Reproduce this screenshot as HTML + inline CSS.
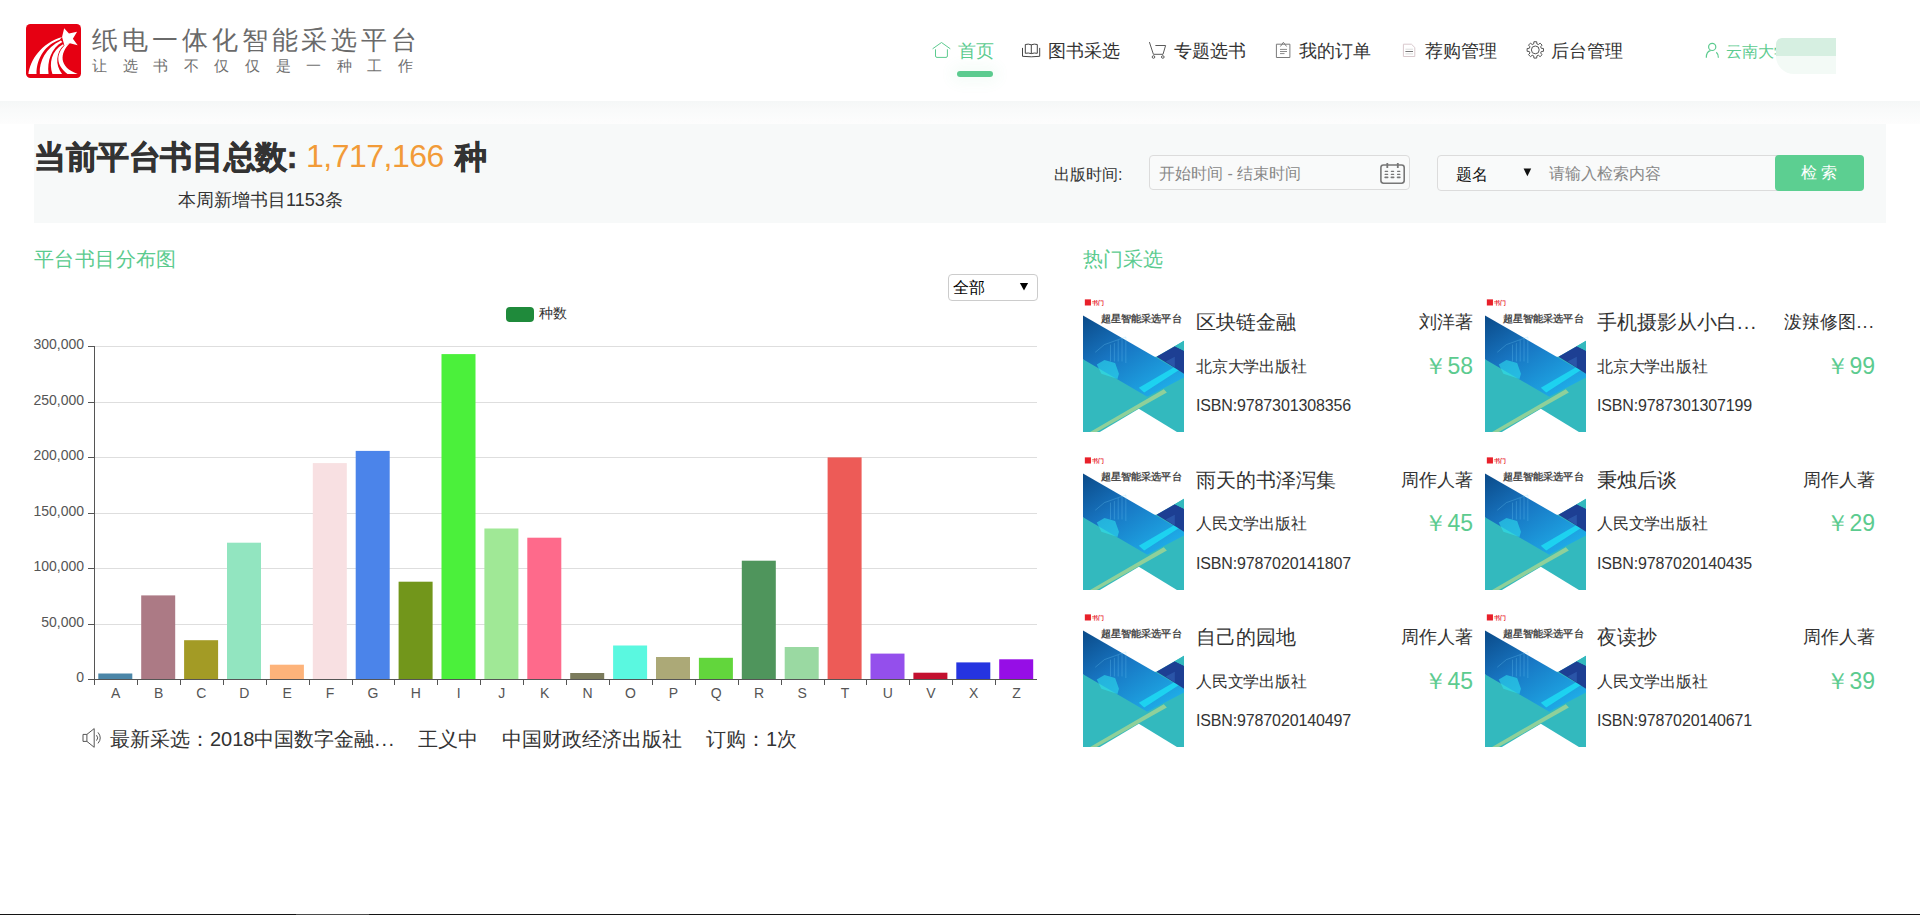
<!DOCTYPE html>
<html><head><meta charset="utf-8"><title>纸电一体化智能采选平台</title>
<style>
html,body{margin:0;padding:0;width:1920px;height:915px;overflow:hidden;background:#fff;font-family:"Liberation Sans",sans-serif;}
.t{position:absolute;white-space:nowrap;}
#hdr{position:absolute;left:0;top:0;width:1920px;height:101px;background:#fff;}
#shadow{position:absolute;left:0;top:101px;width:1920px;height:23px;background:linear-gradient(#f5f7f7,#f9fafa 40%,#fdfdfd);}
#panel{position:absolute;left:34px;top:124px;width:1852px;height:99px;background:#f7f9f9;}
.yl{left:0;width:84px;text-align:right;font-size:14px;line-height:18px;color:#555;}
.xl{top:684px;width:40px;text-align:center;font-size:14px;line-height:18px;color:#555;}
</style></head><body>
<svg width="0" height="0" style="position:absolute"><defs>
<linearGradient id="bg" x1="0" y1="0" x2="0.8" y2="1"><stop offset="0" stop-color="#0b4a88"/><stop offset="0.45" stop-color="#1877c4"/><stop offset="1" stop-color="#1fb0ea"/></linearGradient>
</defs></svg>
<div id="hdr"></div><div id="shadow"></div>
<svg style="position:absolute;left:26px;top:24px" width="55" height="54" viewBox="0 0 55 54">
<rect x="0" y="0" width="55" height="54" rx="4.5" fill="#e60012"/>
<g transform="scale(0.0601)" fill="#fff">
<path d="M635,70 L715,160 L850,130 L780,245 L860,355 L730,320 L640,360 L600,215 Z"/>
<path d="M40,830 C70,600 250,320 600,215 L560,262 C330,340 175,560 175,830 Z"/>
<path d="M230,830 C215,620 330,400 580,275 L605,300 C420,400 350,620 375,830 Z"/>
<path d="M440,830 C380,650 420,450 615,335 L630,355 C500,470 480,680 600,830 Z"/>
<path d="M690,830 C500,690 490,500 650,350 L730,320 C560,480 540,720 860,830 Z"/>
</g></svg>
<div class="t" style="left:92px;top:26.7px;font-size:26px;line-height:26px;color:#6a6a6a;font-weight:normal;letter-spacing:3.92px">纸电一体化智能采选平台</div>
<div class="t" style="left:92px;top:58.6px;font-size:14.5px;line-height:14.5px;color:#707070;font-weight:normal;letter-spacing:15.6px">让选书不仅仅是一种工作</div>
<div class="t" style="left:958px;top:42px;font-size:18px;line-height:18px;color:#5ccb8f;font-weight:normal;">首页</div>
<div class="t" style="left:1048px;top:42px;font-size:18px;line-height:18px;color:#333;font-weight:normal;">图书采选</div>
<div class="t" style="left:1174px;top:42px;font-size:18px;line-height:18px;color:#333;font-weight:normal;">专题选书</div>
<div class="t" style="left:1299px;top:42px;font-size:18px;line-height:18px;color:#333;font-weight:normal;">我的订单</div>
<div class="t" style="left:1425px;top:42px;font-size:18px;line-height:18px;color:#333;font-weight:normal;">荐购管理</div>
<div class="t" style="left:1551px;top:42px;font-size:18px;line-height:18px;color:#333;font-weight:normal;">后台管理</div>
<div style="position:absolute;left:957px;top:71px;width:36px;height:6px;border-radius:3px;background:#5ccb8f;box-shadow:0 0 14px 6px rgba(92,203,143,0.06)"></div>
<svg style="position:absolute;left:0;top:0" width="1920" height="101" viewBox="0 0 1920 101" fill="none">
<g stroke="#5ccb8f" stroke-width="1"><path d="M932.6 48.8 L941.5 42.5 L950.3 48.8"/><path d="M935.5 49.3 V56 Q935.5 57.4 937 57.4 H946 Q947.4 57.4 947.4 56 V49.3"/></g>
<g stroke="#444" stroke-width="1"><path d="M1025.3 44.5 Q1028.3 43.6 1031.3 44.8 Q1034.3 43.6 1037.3 44.5 V53.3 Q1034.3 52.6 1031.3 53.6 Q1028.3 52.6 1025.3 53.3 Z M1031.3 44.8 V53.6"/><path d="M1022.5 47.9 V56.3 L1031.3 56.8 L1039.7 56.3 V47.9"/></g>
<g stroke="#5a5a5a" stroke-width="1"><path d="M1149.4 42.1 L1153.4 54.3 H1163 L1165.6 45.5 H1155.4"/><circle cx="1153.5" cy="57" r="1.3"/><circle cx="1162.8" cy="57" r="1.3"/></g>
<g stroke="#7a7a7a" stroke-width="1"><path d="M1276.4 44.2 H1289.9 V57.5 H1276.4 Z"/><path d="M1280.4 46.5 L1283.4 42.3 L1286.6 46.5"/><path d="M1280 49.4 H1287 M1280 51.5 H1287 M1280 53.6 H1284.5" stroke="#8a8a8a"/></g>
<g stroke-width="1"><path d="M1403.4 44.2 H1411.4 L1414.8 47.5 V56.5 H1403.4 Z" stroke="#d9c9cd"/><path d="M1405.4 49.2 H1413 M1405.4 53.9 H1413" stroke="#ddd"/><path d="M1405.4 51.5 H1413" stroke="#777"/></g>
<g stroke="#555" stroke-width="1"><path d="M1533.71 43.91 L1533.90 41.72 L1536.70 41.72 L1536.89 43.91 L1538.41 44.54 L1540.09 43.12 L1542.08 45.11 L1540.66 46.79 L1541.29 48.31 L1543.48 48.50 L1543.48 51.30 L1541.29 51.49 L1540.66 53.01 L1542.08 54.69 L1540.09 56.68 L1538.41 55.26 L1536.89 55.89 L1536.70 58.08 L1533.90 58.08 L1533.71 55.89 L1532.19 55.26 L1530.51 56.68 L1528.52 54.69 L1529.94 53.01 L1529.31 51.49 L1527.12 51.30 L1527.12 48.50 L1529.31 48.31 L1529.94 46.79 L1528.52 45.11 L1530.51 43.12 L1532.19 44.54 Z"/><circle cx="1535.3" cy="49.9" r="3.9"/></g>
<g stroke="#5ccb8f" stroke-width="1.2"><circle cx="1712.2" cy="46.9" r="3.6"/><path d="M1706.3 57.7 Q1706.3 51.5 1710.5 50.6"/><path d="M1716.3 52.2 Q1718.4 54 1718.4 57.7"/></g>
</svg>
<div class="t" style="left:1726px;top:44px;font-size:16px;line-height:16px;color:#5ccb8f;font-weight:normal;">云南大学</div>
<div style="position:absolute;left:1776px;top:38px;width:60px;height:18px;background:#d6efe1;border-radius:6px 0 0 0"></div>
<div style="position:absolute;left:1776px;top:56px;width:60px;height:18px;background:#f3faf6;border-radius:0 0 0 18px"></div>
<div id="panel"></div>
<div class="t" style="left:34px;top:141px;font-size:32px;line-height:32px;color:#333;font-weight:bold;letter-spacing:-0.4px;-webkit-text-stroke:0.7px #333">当前平台书目总数:</div>
<div class="t" style="left:306px;top:140px;font-size:32px;line-height:32px;color:#f29b38;font-weight:normal;letter-spacing:-0.5px">1,717,166</div>
<div class="t" style="left:455px;top:141px;font-size:32px;line-height:32px;color:#333;font-weight:bold;-webkit-text-stroke:0.7px #333">种</div>
<div class="t" style="left:178px;top:191px;font-size:18px;line-height:18px;color:#333;font-weight:normal;">本周新增书目1153条</div>
<div class="t" style="left:1054px;top:166.5px;font-size:16px;line-height:16px;color:#333;font-weight:normal;">出版时间:</div>
<div style="position:absolute;left:1149px;top:155px;width:259px;height:33px;border:1px solid #dcdcdc;border-radius:4px;background:#f9fafa"></div>
<div class="t" style="left:1159px;top:165.5px;font-size:16px;line-height:16px;color:#888;font-weight:normal;">开始时间 - 结束时间</div>
<svg style="position:absolute;left:0;top:150px" width="1920" height="40" viewBox="0 150 1920 40" fill="none">
<rect x="1380.9" y="165" width="23.3" height="18.2" rx="2.6" stroke="#777" stroke-width="1.6"/>
<path d="M1387.3 163 V168 M1397.8 163 V168" stroke="#777" stroke-width="1.8"/>
<g stroke="#777" stroke-width="1.3" stroke-linecap="round"><path d="M1385.2 171.3 H1387.6 M1391.4 171.3 H1393.6 M1397.6 171.3 H1399.8 M1385.2 174.4 H1387.6 M1391.4 174.4 H1393.6 M1397.6 174.4 H1399.8"/><path d="M1385.2 177.3 H1387.6 M1391.4 177.3 H1393.6 M1397.6 177.3 H1399.8" stroke-width="1.8"/></g>
</svg>
<div style="position:absolute;left:1437px;top:155px;width:344px;height:34px;border:1px solid #dcdcdc;border-radius:4px;background:#f9fafa"></div>
<div class="t" style="left:1456px;top:166.5px;font-size:16px;line-height:16px;color:#111;font-weight:normal;">题名</div>
<svg style="position:absolute;left:1520px;top:165px" width="14" height="14" viewBox="1520 165 14 14"><polygon points="1523.6,168.6 1531.2,168.6 1527.4,176.2" fill="#111"/></svg>
<div class="t" style="left:1549px;top:165.5px;font-size:16px;line-height:16px;color:#888;font-weight:normal;">请输入检索内容</div>
<div style="position:absolute;left:1775px;top:155px;width:89px;height:36px;border-radius:4px;background:#5ccf91"></div>
<div class="t" style="left:1801px;top:165px;font-size:16px;line-height:16px;color:#fff;font-weight:normal;letter-spacing:4px">检索</div>
<div class="t" style="left:34px;top:249px;font-size:20px;line-height:20px;color:#5ccb8f;font-weight:normal;letter-spacing:0.4px">平台书目分布图</div>
<div style="position:absolute;left:948px;top:274px;width:88px;height:25px;border:1px solid #ccc;border-radius:4px;background:#fff"></div>
<div class="t" style="left:953px;top:279.7px;font-size:16px;line-height:16px;color:#000;font-weight:normal;">全部</div>
<svg style="position:absolute;left:1016px;top:280px" width="16" height="14" viewBox="1016 280 16 14"><polygon points="1019.9,283 1028.1,283 1024,290.6" fill="#000"/></svg>
<div style="position:absolute;left:505.5px;top:306.5px;width:28px;height:15.5px;border-radius:4px;background:#1f8a3b"></div>
<div class="t" style="left:539px;top:306px;font-size:14px;line-height:14px;color:#333;font-weight:normal;">种数</div>
<svg style="position:absolute;left:0;top:0" width="1920" height="915" viewBox="0 0 1920 915">
<line x1="95" y1="624.5" x2="1037" y2="624.5" stroke="#dedede" stroke-width="1"/>
<line x1="88" y1="624.5" x2="95" y2="624.5" stroke="#555" stroke-width="1"/>
<line x1="95" y1="568.5" x2="1037" y2="568.5" stroke="#dedede" stroke-width="1"/>
<line x1="88" y1="568.5" x2="95" y2="568.5" stroke="#555" stroke-width="1"/>
<line x1="95" y1="513.5" x2="1037" y2="513.5" stroke="#dedede" stroke-width="1"/>
<line x1="88" y1="513.5" x2="95" y2="513.5" stroke="#555" stroke-width="1"/>
<line x1="95" y1="457.5" x2="1037" y2="457.5" stroke="#dedede" stroke-width="1"/>
<line x1="88" y1="457.5" x2="95" y2="457.5" stroke="#555" stroke-width="1"/>
<line x1="95" y1="402.5" x2="1037" y2="402.5" stroke="#dedede" stroke-width="1"/>
<line x1="88" y1="402.5" x2="95" y2="402.5" stroke="#555" stroke-width="1"/>
<line x1="95" y1="346.5" x2="1037" y2="346.5" stroke="#dedede" stroke-width="1"/>
<line x1="88" y1="346.5" x2="95" y2="346.5" stroke="#555" stroke-width="1"/>
<rect x="98.3" y="673.5" width="34" height="5.8" fill="#4b86a8"/>
<rect x="141.2" y="595.4" width="34" height="83.9" fill="#ac7a85"/>
<rect x="184.1" y="640.2" width="34" height="39.1" fill="#a39b25"/>
<rect x="227.0" y="542.7" width="34" height="136.6" fill="#92e5c0"/>
<rect x="269.9" y="664.7" width="34" height="14.6" fill="#fdb37a"/>
<rect x="312.8" y="463.1" width="34" height="216.2" fill="#f8e0e2"/>
<rect x="355.7" y="450.9" width="34" height="228.4" fill="#4b84ea"/>
<rect x="398.6" y="581.7" width="34" height="97.6" fill="#72961b"/>
<rect x="441.5" y="354.1" width="34" height="325.2" fill="#4bf03b"/>
<rect x="484.4" y="528.5" width="34" height="150.8" fill="#a0e896"/>
<rect x="527.3" y="537.7" width="34" height="141.6" fill="#fe6a8b"/>
<rect x="570.2" y="673" width="34" height="6.3" fill="#7b7b5c"/>
<rect x="613.1" y="645.5" width="34" height="33.8" fill="#5af8e0"/>
<rect x="656.0" y="657" width="34" height="22.3" fill="#aca977"/>
<rect x="698.9" y="657.8" width="34" height="21.5" fill="#62d63c"/>
<rect x="741.8" y="560.7" width="34" height="118.6" fill="#4f955c"/>
<rect x="784.7" y="647" width="34" height="32.3" fill="#9ad9a2"/>
<rect x="827.6" y="457.4" width="34" height="221.9" fill="#ed5b57"/>
<rect x="870.5" y="653.6" width="34" height="25.7" fill="#944fec"/>
<rect x="913.4" y="672.7" width="34" height="6.6" fill="#c3102f"/>
<rect x="956.3" y="662.4" width="34" height="16.9" fill="#2534e0"/>
<rect x="999.2" y="659.3" width="34" height="20.0" fill="#960ee6"/>
<line x1="94.5" y1="679" x2="94.5" y2="685" stroke="#555" stroke-width="1"/>
<line x1="137.5" y1="679" x2="137.5" y2="685" stroke="#555" stroke-width="1"/>
<line x1="180.5" y1="679" x2="180.5" y2="685" stroke="#555" stroke-width="1"/>
<line x1="223.5" y1="679" x2="223.5" y2="685" stroke="#555" stroke-width="1"/>
<line x1="266.5" y1="679" x2="266.5" y2="685" stroke="#555" stroke-width="1"/>
<line x1="309.5" y1="679" x2="309.5" y2="685" stroke="#555" stroke-width="1"/>
<line x1="352.5" y1="679" x2="352.5" y2="685" stroke="#555" stroke-width="1"/>
<line x1="394.5" y1="679" x2="394.5" y2="685" stroke="#555" stroke-width="1"/>
<line x1="437.5" y1="679" x2="437.5" y2="685" stroke="#555" stroke-width="1"/>
<line x1="480.5" y1="679" x2="480.5" y2="685" stroke="#555" stroke-width="1"/>
<line x1="523.5" y1="679" x2="523.5" y2="685" stroke="#555" stroke-width="1"/>
<line x1="566.5" y1="679" x2="566.5" y2="685" stroke="#555" stroke-width="1"/>
<line x1="609.5" y1="679" x2="609.5" y2="685" stroke="#555" stroke-width="1"/>
<line x1="652.5" y1="679" x2="652.5" y2="685" stroke="#555" stroke-width="1"/>
<line x1="695.5" y1="679" x2="695.5" y2="685" stroke="#555" stroke-width="1"/>
<line x1="738.5" y1="679" x2="738.5" y2="685" stroke="#555" stroke-width="1"/>
<line x1="781.5" y1="679" x2="781.5" y2="685" stroke="#555" stroke-width="1"/>
<line x1="824.5" y1="679" x2="824.5" y2="685" stroke="#555" stroke-width="1"/>
<line x1="866.5" y1="679" x2="866.5" y2="685" stroke="#555" stroke-width="1"/>
<line x1="909.5" y1="679" x2="909.5" y2="685" stroke="#555" stroke-width="1"/>
<line x1="952.5" y1="679" x2="952.5" y2="685" stroke="#555" stroke-width="1"/>
<line x1="995.5" y1="679" x2="995.5" y2="685" stroke="#555" stroke-width="1"/>
<line x1="88" y1="679.5" x2="1037" y2="679.5" stroke="#555" stroke-width="1"/>
<line x1="94.5" y1="346" x2="94.5" y2="680" stroke="#555" stroke-width="1"/>
</svg>
<div class="t yl" style="top:668.3px">0</div>
<div class="t yl" style="top:612.8px">50,000</div>
<div class="t yl" style="top:557.3px">100,000</div>
<div class="t yl" style="top:501.8px">150,000</div>
<div class="t yl" style="top:446.3px">200,000</div>
<div class="t yl" style="top:390.8px">250,000</div>
<div class="t yl" style="top:335.3px">300,000</div>
<div class="t xl" style="left:95.7px">A</div>
<div class="t xl" style="left:138.6px">B</div>
<div class="t xl" style="left:181.4px">C</div>
<div class="t xl" style="left:224.4px">D</div>
<div class="t xl" style="left:267.2px">E</div>
<div class="t xl" style="left:310.1px">F</div>
<div class="t xl" style="left:353.0px">G</div>
<div class="t xl" style="left:395.9px">H</div>
<div class="t xl" style="left:438.8px">I</div>
<div class="t xl" style="left:481.8px">J</div>
<div class="t xl" style="left:524.6px">K</div>
<div class="t xl" style="left:567.5px">N</div>
<div class="t xl" style="left:610.5px">O</div>
<div class="t xl" style="left:653.4px">P</div>
<div class="t xl" style="left:696.2px">Q</div>
<div class="t xl" style="left:739.1px">R</div>
<div class="t xl" style="left:782.1px">S</div>
<div class="t xl" style="left:825.0px">T</div>
<div class="t xl" style="left:867.9px">U</div>
<div class="t xl" style="left:910.8px">V</div>
<div class="t xl" style="left:953.6px">X</div>
<div class="t xl" style="left:996.6px">Z</div>
<svg style="position:absolute;left:0;top:720px" width="120" height="35" viewBox="0 720 120 35" fill="none" stroke="#555" stroke-width="1">
<path d="M83 734.4 H86.9 V741.4 H83 Z"/><path d="M86.9 734.4 L94.2 728.6 V747.3 L86.9 741.4"/>
<path d="M96.5 735.2 Q99 737.9 96.5 740.6"/><path d="M98 732.4 Q102.5 737.9 98 743.4"/>
</svg>
<div class="t" style="left:110px;top:729px;font-size:20px;line-height:20px;color:#333;font-weight:normal;">最新采选：2018中国数字金融<span style="letter-spacing:1.5px">...</span></div>
<div class="t" style="left:418px;top:729px;font-size:20px;line-height:20px;color:#333;font-weight:normal;">王义中</div>
<div class="t" style="left:502px;top:729px;font-size:20px;line-height:20px;color:#333;font-weight:normal;">中国财政经济出版社</div>
<div class="t" style="left:706px;top:729px;font-size:20px;line-height:20px;color:#333;font-weight:normal;">订购：1次</div>
<div class="t" style="left:1083px;top:249px;font-size:20px;line-height:20px;color:#5ccb8f;font-weight:normal;">热门采选</div>
<svg style="position:absolute;left:1083px;top:294.0px" width="101" height="138" viewBox="20 0 660 900" preserveAspectRatio="none">
<rect x="20" y="0" width="660" height="900" fill="#fff"/>
<polygon points="20,425 20,900 680,900 680,305 500,410" fill="#33b9be"/>
<polygon points="20,140 680,520 680,545 440,670 20,425" fill="url(#bg)"/>
<g stroke="#7fd8ff" stroke-width="4" opacity="0.4" fill="none"><path d="M160,330 L300,280 M100,380 L160,330 M200,440 V330 M225,440 V320 M250,440 V300 M275,440 V290 M300,450 V280"/></g>
<polygon points="110,460 160,430 230,450 255,520 245,555 140,520" fill="#2fe6f0" opacity="0.55"/>
<polygon points="385,612 615,478 650,494 420,642" fill="#1de3f5" opacity="0.75"/>
<polygon points="500,410 620,340 680,370 680,520 600,470" fill="#1d3f93"/>
<polygon points="620,340 680,305 680,370" fill="#33b9be"/>
<polygon points="560,440 620,410 620,480" fill="#2a55a8"/>
<polygon points="385,748 130,900 634,900" fill="#fff"/>
<polygon points="548,622 568,642 110,900 66,900" fill="#8fd09a"/>
<rect x="32" y="35" width="40" height="40" fill="#e8202a"/>
<text x="80" y="72" font-size="40" fill="#e8202a" font-weight="bold">书门</text>
<text x="135" y="185" font-size="66" font-weight="bold" fill="#4a4a4a" textLength="530" lengthAdjust="spacingAndGlyphs">超星智能采选平台</text>
</svg>
<div class="t" style="left:1196px;top:312.0px;font-size:20px;line-height:20px;color:#333;font-weight:normal;">区块链金融</div>
<div class="t" style="left:1273px;width:200px;text-align:right;top:313.0px;font-size:18px;line-height:18px;color:#333">刘洋著</div>
<div class="t" style="left:1196px;top:358.5px;font-size:16px;line-height:16px;color:#333;font-weight:normal;letter-spacing:-0.2px">北京大学出版社</div>
<div class="t" style="left:1273px;width:200px;text-align:right;top:354.5px;font-size:23px;line-height:23px;color:#5ccb8f">￥58</div>
<div class="t" style="left:1196px;top:398.0px;font-size:16px;line-height:16px;color:#333;font-weight:normal;letter-spacing:-0.14px">ISBN:9787301308356</div>
<svg style="position:absolute;left:1485px;top:294.0px" width="101" height="138" viewBox="20 0 660 900" preserveAspectRatio="none">
<rect x="20" y="0" width="660" height="900" fill="#fff"/>
<polygon points="20,425 20,900 680,900 680,305 500,410" fill="#33b9be"/>
<polygon points="20,140 680,520 680,545 440,670 20,425" fill="url(#bg)"/>
<g stroke="#7fd8ff" stroke-width="4" opacity="0.4" fill="none"><path d="M160,330 L300,280 M100,380 L160,330 M200,440 V330 M225,440 V320 M250,440 V300 M275,440 V290 M300,450 V280"/></g>
<polygon points="110,460 160,430 230,450 255,520 245,555 140,520" fill="#2fe6f0" opacity="0.55"/>
<polygon points="385,612 615,478 650,494 420,642" fill="#1de3f5" opacity="0.75"/>
<polygon points="500,410 620,340 680,370 680,520 600,470" fill="#1d3f93"/>
<polygon points="620,340 680,305 680,370" fill="#33b9be"/>
<polygon points="560,440 620,410 620,480" fill="#2a55a8"/>
<polygon points="385,748 130,900 634,900" fill="#fff"/>
<polygon points="548,622 568,642 110,900 66,900" fill="#8fd09a"/>
<rect x="32" y="35" width="40" height="40" fill="#e8202a"/>
<text x="80" y="72" font-size="40" fill="#e8202a" font-weight="bold">书门</text>
<text x="135" y="185" font-size="66" font-weight="bold" fill="#4a4a4a" textLength="530" lengthAdjust="spacingAndGlyphs">超星智能采选平台</text>
</svg>
<div class="t" style="left:1597px;top:312.0px;font-size:20px;line-height:20px;color:#333;font-weight:normal;">手机摄影从小白<span style="letter-spacing:1.2px">...</span></div>
<div class="t" style="left:1675px;width:200px;text-align:right;top:313.0px;font-size:18px;line-height:18px;color:#333">泼辣修图<span style="letter-spacing:1.2px">...</span></div>
<div class="t" style="left:1597px;top:358.5px;font-size:16px;line-height:16px;color:#333;font-weight:normal;letter-spacing:-0.2px">北京大学出版社</div>
<div class="t" style="left:1675px;width:200px;text-align:right;top:354.5px;font-size:23px;line-height:23px;color:#5ccb8f">￥99</div>
<div class="t" style="left:1597px;top:398.0px;font-size:16px;line-height:16px;color:#333;font-weight:normal;letter-spacing:-0.14px">ISBN:9787301307199</div>
<svg style="position:absolute;left:1083px;top:451.5px" width="101" height="138" viewBox="20 0 660 900" preserveAspectRatio="none">
<rect x="20" y="0" width="660" height="900" fill="#fff"/>
<polygon points="20,425 20,900 680,900 680,305 500,410" fill="#33b9be"/>
<polygon points="20,140 680,520 680,545 440,670 20,425" fill="url(#bg)"/>
<g stroke="#7fd8ff" stroke-width="4" opacity="0.4" fill="none"><path d="M160,330 L300,280 M100,380 L160,330 M200,440 V330 M225,440 V320 M250,440 V300 M275,440 V290 M300,450 V280"/></g>
<polygon points="110,460 160,430 230,450 255,520 245,555 140,520" fill="#2fe6f0" opacity="0.55"/>
<polygon points="385,612 615,478 650,494 420,642" fill="#1de3f5" opacity="0.75"/>
<polygon points="500,410 620,340 680,370 680,520 600,470" fill="#1d3f93"/>
<polygon points="620,340 680,305 680,370" fill="#33b9be"/>
<polygon points="560,440 620,410 620,480" fill="#2a55a8"/>
<polygon points="385,748 130,900 634,900" fill="#fff"/>
<polygon points="548,622 568,642 110,900 66,900" fill="#8fd09a"/>
<rect x="32" y="35" width="40" height="40" fill="#e8202a"/>
<text x="80" y="72" font-size="40" fill="#e8202a" font-weight="bold">书门</text>
<text x="135" y="185" font-size="66" font-weight="bold" fill="#4a4a4a" textLength="530" lengthAdjust="spacingAndGlyphs">超星智能采选平台</text>
</svg>
<div class="t" style="left:1196px;top:469.5px;font-size:20px;line-height:20px;color:#333;font-weight:normal;">雨天的书泽泻集</div>
<div class="t" style="left:1273px;width:200px;text-align:right;top:470.5px;font-size:18px;line-height:18px;color:#333">周作人著</div>
<div class="t" style="left:1196px;top:516.0px;font-size:16px;line-height:16px;color:#333;font-weight:normal;letter-spacing:-0.2px">人民文学出版社</div>
<div class="t" style="left:1273px;width:200px;text-align:right;top:512.0px;font-size:23px;line-height:23px;color:#5ccb8f">￥45</div>
<div class="t" style="left:1196px;top:555.5px;font-size:16px;line-height:16px;color:#333;font-weight:normal;letter-spacing:-0.14px">ISBN:9787020141807</div>
<svg style="position:absolute;left:1485px;top:451.5px" width="101" height="138" viewBox="20 0 660 900" preserveAspectRatio="none">
<rect x="20" y="0" width="660" height="900" fill="#fff"/>
<polygon points="20,425 20,900 680,900 680,305 500,410" fill="#33b9be"/>
<polygon points="20,140 680,520 680,545 440,670 20,425" fill="url(#bg)"/>
<g stroke="#7fd8ff" stroke-width="4" opacity="0.4" fill="none"><path d="M160,330 L300,280 M100,380 L160,330 M200,440 V330 M225,440 V320 M250,440 V300 M275,440 V290 M300,450 V280"/></g>
<polygon points="110,460 160,430 230,450 255,520 245,555 140,520" fill="#2fe6f0" opacity="0.55"/>
<polygon points="385,612 615,478 650,494 420,642" fill="#1de3f5" opacity="0.75"/>
<polygon points="500,410 620,340 680,370 680,520 600,470" fill="#1d3f93"/>
<polygon points="620,340 680,305 680,370" fill="#33b9be"/>
<polygon points="560,440 620,410 620,480" fill="#2a55a8"/>
<polygon points="385,748 130,900 634,900" fill="#fff"/>
<polygon points="548,622 568,642 110,900 66,900" fill="#8fd09a"/>
<rect x="32" y="35" width="40" height="40" fill="#e8202a"/>
<text x="80" y="72" font-size="40" fill="#e8202a" font-weight="bold">书门</text>
<text x="135" y="185" font-size="66" font-weight="bold" fill="#4a4a4a" textLength="530" lengthAdjust="spacingAndGlyphs">超星智能采选平台</text>
</svg>
<div class="t" style="left:1597px;top:469.5px;font-size:20px;line-height:20px;color:#333;font-weight:normal;">秉烛后谈</div>
<div class="t" style="left:1675px;width:200px;text-align:right;top:470.5px;font-size:18px;line-height:18px;color:#333">周作人著</div>
<div class="t" style="left:1597px;top:516.0px;font-size:16px;line-height:16px;color:#333;font-weight:normal;letter-spacing:-0.2px">人民文学出版社</div>
<div class="t" style="left:1675px;width:200px;text-align:right;top:512.0px;font-size:23px;line-height:23px;color:#5ccb8f">￥29</div>
<div class="t" style="left:1597px;top:555.5px;font-size:16px;line-height:16px;color:#333;font-weight:normal;letter-spacing:-0.14px">ISBN:9787020140435</div>
<svg style="position:absolute;left:1083px;top:609.0px" width="101" height="138" viewBox="20 0 660 900" preserveAspectRatio="none">
<rect x="20" y="0" width="660" height="900" fill="#fff"/>
<polygon points="20,425 20,900 680,900 680,305 500,410" fill="#33b9be"/>
<polygon points="20,140 680,520 680,545 440,670 20,425" fill="url(#bg)"/>
<g stroke="#7fd8ff" stroke-width="4" opacity="0.4" fill="none"><path d="M160,330 L300,280 M100,380 L160,330 M200,440 V330 M225,440 V320 M250,440 V300 M275,440 V290 M300,450 V280"/></g>
<polygon points="110,460 160,430 230,450 255,520 245,555 140,520" fill="#2fe6f0" opacity="0.55"/>
<polygon points="385,612 615,478 650,494 420,642" fill="#1de3f5" opacity="0.75"/>
<polygon points="500,410 620,340 680,370 680,520 600,470" fill="#1d3f93"/>
<polygon points="620,340 680,305 680,370" fill="#33b9be"/>
<polygon points="560,440 620,410 620,480" fill="#2a55a8"/>
<polygon points="385,748 130,900 634,900" fill="#fff"/>
<polygon points="548,622 568,642 110,900 66,900" fill="#8fd09a"/>
<rect x="32" y="35" width="40" height="40" fill="#e8202a"/>
<text x="80" y="72" font-size="40" fill="#e8202a" font-weight="bold">书门</text>
<text x="135" y="185" font-size="66" font-weight="bold" fill="#4a4a4a" textLength="530" lengthAdjust="spacingAndGlyphs">超星智能采选平台</text>
</svg>
<div class="t" style="left:1196px;top:627.0px;font-size:20px;line-height:20px;color:#333;font-weight:normal;">自己的园地</div>
<div class="t" style="left:1273px;width:200px;text-align:right;top:628.0px;font-size:18px;line-height:18px;color:#333">周作人著</div>
<div class="t" style="left:1196px;top:673.5px;font-size:16px;line-height:16px;color:#333;font-weight:normal;letter-spacing:-0.2px">人民文学出版社</div>
<div class="t" style="left:1273px;width:200px;text-align:right;top:669.5px;font-size:23px;line-height:23px;color:#5ccb8f">￥45</div>
<div class="t" style="left:1196px;top:713.0px;font-size:16px;line-height:16px;color:#333;font-weight:normal;letter-spacing:-0.14px">ISBN:9787020140497</div>
<svg style="position:absolute;left:1485px;top:609.0px" width="101" height="138" viewBox="20 0 660 900" preserveAspectRatio="none">
<rect x="20" y="0" width="660" height="900" fill="#fff"/>
<polygon points="20,425 20,900 680,900 680,305 500,410" fill="#33b9be"/>
<polygon points="20,140 680,520 680,545 440,670 20,425" fill="url(#bg)"/>
<g stroke="#7fd8ff" stroke-width="4" opacity="0.4" fill="none"><path d="M160,330 L300,280 M100,380 L160,330 M200,440 V330 M225,440 V320 M250,440 V300 M275,440 V290 M300,450 V280"/></g>
<polygon points="110,460 160,430 230,450 255,520 245,555 140,520" fill="#2fe6f0" opacity="0.55"/>
<polygon points="385,612 615,478 650,494 420,642" fill="#1de3f5" opacity="0.75"/>
<polygon points="500,410 620,340 680,370 680,520 600,470" fill="#1d3f93"/>
<polygon points="620,340 680,305 680,370" fill="#33b9be"/>
<polygon points="560,440 620,410 620,480" fill="#2a55a8"/>
<polygon points="385,748 130,900 634,900" fill="#fff"/>
<polygon points="548,622 568,642 110,900 66,900" fill="#8fd09a"/>
<rect x="32" y="35" width="40" height="40" fill="#e8202a"/>
<text x="80" y="72" font-size="40" fill="#e8202a" font-weight="bold">书门</text>
<text x="135" y="185" font-size="66" font-weight="bold" fill="#4a4a4a" textLength="530" lengthAdjust="spacingAndGlyphs">超星智能采选平台</text>
</svg>
<div class="t" style="left:1597px;top:627.0px;font-size:20px;line-height:20px;color:#333;font-weight:normal;">夜读抄</div>
<div class="t" style="left:1675px;width:200px;text-align:right;top:628.0px;font-size:18px;line-height:18px;color:#333">周作人著</div>
<div class="t" style="left:1597px;top:673.5px;font-size:16px;line-height:16px;color:#333;font-weight:normal;letter-spacing:-0.2px">人民文学出版社</div>
<div class="t" style="left:1675px;width:200px;text-align:right;top:669.5px;font-size:23px;line-height:23px;color:#5ccb8f">￥39</div>
<div class="t" style="left:1597px;top:713.0px;font-size:16px;line-height:16px;color:#333;font-weight:normal;letter-spacing:-0.14px">ISBN:9787020140671</div>
<div style="position:absolute;left:0;top:914px;width:1920px;height:1px;background:#141414"></div><div style="position:absolute;left:296px;top:914px;width:73px;height:1px;background:#4a4a4a"></div>
</body></html>
